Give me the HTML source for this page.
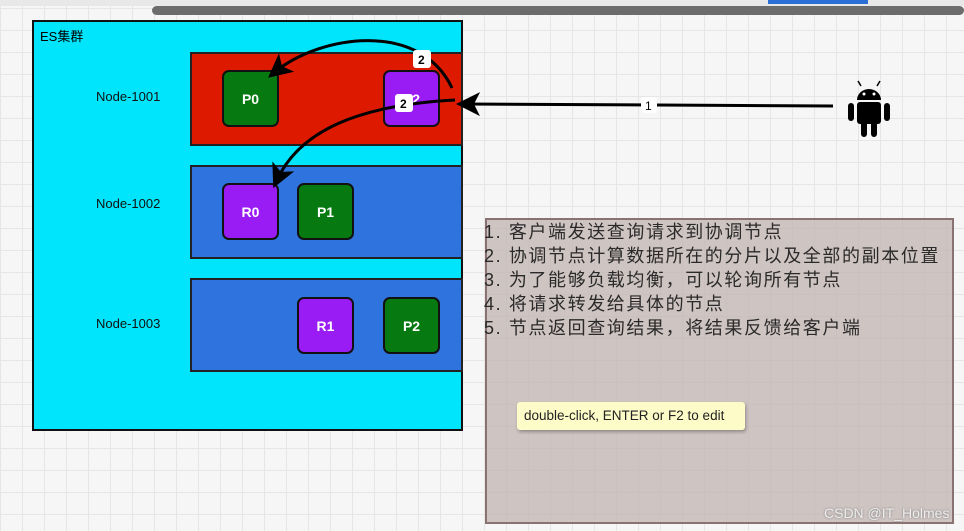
<!DOCTYPE html>
<html><head><meta charset="utf-8"><style>
body{margin:0;width:964px;height:531px;overflow:hidden;position:relative;font-family:"Liberation Sans","Noto Sans CJK SC",sans-serif;
background-color:#f6f6f6;background-image:linear-gradient(#e6e6e6 1px,transparent 1px),linear-gradient(90deg,#e6e6e6 1px,transparent 1px);background-size:22px 22px;background-position:0 8px}
.a{position:absolute;box-sizing:border-box}
.n{border:2px solid #111;border-radius:7px;color:#fff;font-weight:bold;font-size:14px;display:flex;align-items:center;justify-content:center;width:57px;height:57px}
.g{background:#067a10}.p{background:#9a1cf5}
.lb{font-size:13px;color:#111}
</style></head><body>
<div class="a" style="left:0;top:0;width:964px;height:6px;background:#e8e8e8"></div>
<div class="a" style="left:768px;top:0;width:100px;height:4px;background:#2a6fd6"></div>
<div class="a" style="left:152px;top:6px;width:812px;height:9px;background:#6c6c6c;border-radius:5px"></div>
<div class="a" style="left:32px;top:20px;width:431px;height:411px;background:#00e5fb;border:2px solid #111"></div>
<div class="a" style="left:40px;top:26px;font-size:13px">ES集群</div>
<div class="a" style="left:190px;top:52px;width:273px;height:94px;background:#dd1a00;border:2px solid #222"></div>
<div class="a" style="left:190px;top:165px;width:273px;height:94px;background:#2f74de;border:2px solid #222"></div>
<div class="a" style="left:190px;top:278px;width:273px;height:94px;background:#2f74de;border:2px solid #222"></div>
<div class="a lb" style="left:96px;top:89px">Node-1001</div>
<div class="a lb" style="left:96px;top:196px">Node-1002</div>
<div class="a lb" style="left:96px;top:316px">Node-1003</div>
<div class="a n g" style="left:222px;top:70px">P0</div>
<div class="a n p" style="left:383px;top:70px">P2</div>
<div class="a n p" style="left:222px;top:183px">R0</div>
<div class="a n g" style="left:297px;top:183px">P1</div>
<div class="a n p" style="left:297px;top:297px">R1</div>
<div class="a n g" style="left:383px;top:297px">P2</div>
<svg class="a" style="left:0;top:0" width="964" height="531">
<defs><marker id="m" markerWidth="8" markerHeight="8" refX="5" refY="4" orient="auto"><path d="M0,0 L8,4 L0,8 L2,4z" fill="#000"/></marker></defs>
<g stroke="#000" stroke-width="3" fill="none">
<path d="M452,88 C420,20 320,35 275,72" marker-end="url(#m)"/>
<path d="M455,100 C360,105 300,130 277,180" marker-end="url(#m)"/>
<path d="M833,106 L465,104" marker-end="url(#m)"/>
</g>
<g font-family="Liberation Sans" font-size="12" font-weight="bold">
<rect x="413" y="50" width="18" height="18" rx="3" fill="#fff"/><text x="418" y="64">2</text>
<rect x="395" y="94" width="18" height="18" rx="3" fill="#fff"/><text x="400" y="108">2</text>
<rect x="641" y="97" width="16" height="16" rx="3" fill="#fff"/><text x="645" y="110" font-weight="normal">1</text>
</g>
<g fill="#000">
<rect x="857" y="102" width="24" height="22" rx="3"/>
<path d="M857,100 a12,11 0 0 1 24,0z"/>
<rect x="848" y="103" width="6" height="18" rx="3"/><rect x="884" y="103" width="6" height="18" rx="3"/>
<rect x="861" y="120" width="6" height="17" rx="3"/><rect x="871" y="120" width="6" height="17" rx="3"/>
<path d="M861,86 l-3,-5 M877,86 l3,-5" stroke="#000" stroke-width="1.5"/>
</g>
<circle cx="864" cy="94" r="1.5" fill="#fff"/><circle cx="874" cy="94" r="1.5" fill="#fff"/>
</svg>
<div class="a" style="left:485px;top:218px;width:469px;height:306px;background:rgba(190,175,172,.7);border:2px solid #8a7272"></div>
<div class="a" style="left:484px;top:220px;font-size:18px;letter-spacing:1.6px;line-height:24px;color:#2a2a2a;font-family:'Liberation Sans','Noto Sans CJK SC',sans-serif;white-space:nowrap">1. 客户端发送查询请求到协调节点<br>2. 协调节点计算数据所在的分片以及全部的副本位置<br>3. 为了能够负载均衡，可以轮询所有节点<br>4. 将请求转发给具体的节点<br>5. 节点返回查询结果，将结果反馈给客户端</div>
<div class="a" style="left:517px;top:402px;width:228px;height:28px;background:#fdfbc8;border-radius:3px;box-shadow:1px 2px 3px rgba(0,0,0,.3);font-size:13.5px;line-height:28px;padding-left:7px;color:#222">double-click, ENTER or F2 to edit</div>
<div class="a" style="left:824px;top:505px;font-size:14px;color:#eee;text-shadow:0 0 2px #777">CSDN @IT_Holmes</div>
</body></html>
